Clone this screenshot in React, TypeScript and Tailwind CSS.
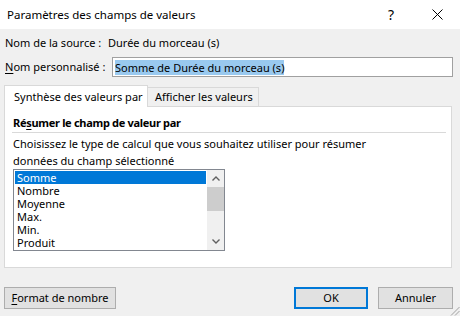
import React from "react";

const items = ["Somme", "Nombre", "Moyenne", "Max.", "Min.", "Produit"];

export default function App() {
  return (
    <div
      className="relative w-[460px] h-[316px] overflow-hidden whitespace-nowrap bg-[#f0f0f0] text-[11px] text-black"
      style={{ fontFamily: '"Noto Sans", "Open Sans", sans-serif' }}
    >
      {/* Title bar */}
      <div className="flex h-[29px] items-center bg-white pl-[7px]">
        <div className="text-[11.5px] leading-[16px]">Paramètres des champs de valeurs</div>
        <div className="ml-auto flex items-center">
          <div className="w-[46px] text-center text-[14px] leading-[16px]">?</div>
          <div className="flex w-[46px] items-center justify-center">
            <svg width="11" height="11" viewBox="0 0 11 11">
              <path d="M0.5 0.5 L10.5 10.5 M10.5 0.5 L0.5 10.5" stroke="#000" strokeWidth="1" />
            </svg>
          </div>
        </div>
      </div>

      {/* Source row */}
      <div className="mt-[5px] flex h-[18px] items-center pl-[5px] leading-[16px]">
        <span className="w-[103px]">Nom de la source :</span>
        <span>Durée du morceau (s)</span>
      </div>

      {/* Custom name row */}
      <div className="mt-[5px] flex h-[20px] items-center pl-[5px]">
        <span className="w-[107px] leading-[16px]">
          <span className="underline underline-offset-2">N</span>om personnalisé :
        </span>
        <div className="flex h-[20px] w-[341px] items-center border border-[#a0a0a0] bg-white pl-[2px]">
          <span className="bg-[#99c9ef] leading-[15px]">Somme de Durée du morceau (s)</span>
        </div>
      </div>

      {/* Tabs */}
      <div className="mt-[8px] px-[4px]">
        <div className="flex h-[21px] items-end">
          <div className="relative z-10 mb-[-1px] flex h-[22px] w-[144px] items-center border-l border-r border-t border-[#d9d9d9] bg-white pl-[9px] leading-[16px]">
            Synthèse des valeurs par
          </div>
          <div className="flex h-[19px] w-[111px] items-center border-r border-t border-[#d9d9d9] bg-[#f0f0f0] pl-[7px] leading-[16px]">
            Afficher les valeurs
          </div>
        </div>
        <div className="h-[162px] w-[448px] border border-[#d9d9d9] bg-white pt-[8px]">
          <div className="pl-[8px] font-bold leading-[16px] tracking-[-0.3px]">
            Ré<span className="underline underline-offset-2">s</span>umer le champ de valeur par
          </div>
          <div className="ml-[7px] mr-[5px] mt-[1px] border-t border-[#d9d9d9]" />
          <div className="mt-[2px] pl-[8px] leading-[17px]">
            Choisissez le type de calcul que vous souhaitez utiliser pour résumer
            <br />
            données du champ sélectionné
          </div>
          <div className="ml-[8px] flex h-[82px] w-[212px] border border-[#828790] bg-white">
            <div className="flex-1 p-[1px]">
              {items.map((it, i) => (
                <div
                  key={it}
                  className={
                    "h-[13px] pl-[2px] leading-[13px] " +
                    (i === 0 ? "bg-[#0078d7] text-white" : "")
                  }
                >
                  {it}
                </div>
              ))}
            </div>
            <div className="flex w-[17px] flex-col bg-[#f0f0f0]">
              <div className="flex h-[17px] items-center justify-center">
                <svg width="8" height="5" viewBox="0 0 8 5">
                  <path d="M0.5 4.5 L4 1 L7.5 4.5" stroke="#606060" strokeWidth="1.4" fill="none" />
                </svg>
              </div>
              <div className="h-[24px] bg-[#cdcdcd]" />
              <div className="flex-1" />
              <div className="flex h-[17px] items-center justify-center">
                <svg width="8" height="5" viewBox="0 0 8 5">
                  <path d="M0.5 0.5 L4 4 L7.5 0.5" stroke="#606060" strokeWidth="1.4" fill="none" />
                </svg>
              </div>
            </div>
          </div>
        </div>
      </div>

      {/* Buttons */}
      <div className="mt-[19px] flex px-[4px]">
        <div className="flex h-[22px] w-[112px] items-center justify-center border border-[#adadad] bg-[#e1e1e1] leading-[16px]">
          <span>
            <span className="underline underline-offset-2">F</span>ormat de nombre
          </span>
        </div>
        <div className="ml-auto flex h-[22px] w-[74px] items-center justify-center border-2 border-[#0078d7] bg-[#e1e1e1] leading-[16px]">
          OK
        </div>
        <div className="ml-[10px] mr-[3px] flex h-[22px] w-[75px] items-center justify-center border border-[#adadad] bg-[#e1e1e1] leading-[16px]">
          Annuler
        </div>
      </div>

      {/* Resize grip */}
      <svg className="absolute bottom-0 right-0" width="11" height="11" viewBox="0 0 11 11">
        <path d="M10.5 2 L2 10.5 M10.5 6 L6 10.5" stroke="#a0a0a0" strokeWidth="1" />
      </svg>
    </div>
  );
}
